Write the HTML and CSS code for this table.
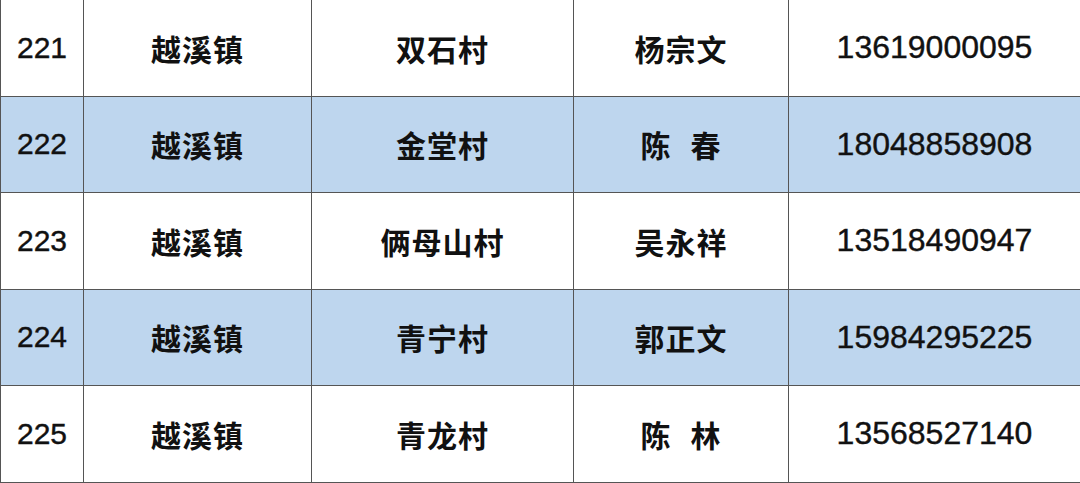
FILE: index.html
```html
<!DOCTYPE html>
<html lang="zh">
<head>
<meta charset="utf-8">
<title>越溪镇 联系表</title>
<link rel="stylesheet" href="styles.css">
</head>
<body>
<table class="roster">
  <colgroup>
    <col class="c-no"><col class="c-town"><col class="c-village"><col class="c-name"><col class="c-phone">
  </colgroup>
  <tbody>
    <tr>
      <td class="num">221</td><td class="zh">越溪镇</td><td class="zh">双石村</td><td class="zh">杨宗文</td><td class="num phone">13619000095</td>
    </tr>
    <tr class="alt">
      <td class="num">222</td><td class="zh">越溪镇</td><td class="zh">金堂村</td><td class="zh">陈<span class="sp"></span>春</td><td class="num phone">18048858908</td>
    </tr>
    <tr>
      <td class="num">223</td><td class="zh">越溪镇</td><td class="zh">俩母山村</td><td class="zh">吴永祥</td><td class="num phone">13518490947</td>
    </tr>
    <tr class="alt">
      <td class="num">224</td><td class="zh">越溪镇</td><td class="zh">青宁村</td><td class="zh">郭正文</td><td class="num phone">15984295225</td>
    </tr>
    <tr>
      <td class="num">225</td><td class="zh">越溪镇</td><td class="zh">青龙村</td><td class="zh">陈<span class="sp"></span>林</td><td class="num phone">13568527140</td>
    </tr>
  </tbody>
</table>
</body>
</html>
```

FILE: styles.css
```css
html, body {
  margin: 0;
  padding: 0;
  background: #ffffff;
  overflow: hidden;
}

.roster {
  border-collapse: collapse;
  table-layout: fixed;
  width: 1080px;
  margin-top: -1px;
  font-family: "Liberation Sans", "Noto Sans CJK SC", sans-serif;
  color: #111111;
}

.c-no { width: 83px; }
.c-town { width: 228px; }
.c-village { width: 262px; }
.c-name { width: 215px; }
.c-phone { width: 292px; }

.roster td {
  border: 1px solid #555555;
  height: 95.5px;
  padding: 0;
  text-align: center;
  vertical-align: middle;
  white-space: nowrap;
}

.roster tr.alt td {
  background: #bed6ee;
}

.num {
  font-size: 30px;
  font-weight: 400;
  padding-top: 4px;
  -webkit-text-stroke: 0.4px #111111;
}

.phone {
  font-size: 32px;
}

.zh {
  font-family: "Noto Sans CJK SC", sans-serif;
  font-size: 30px;
  font-weight: 700;
  letter-spacing: 1px;
}

.sp {
  display: inline-block;
  width: 19px;
}
```
